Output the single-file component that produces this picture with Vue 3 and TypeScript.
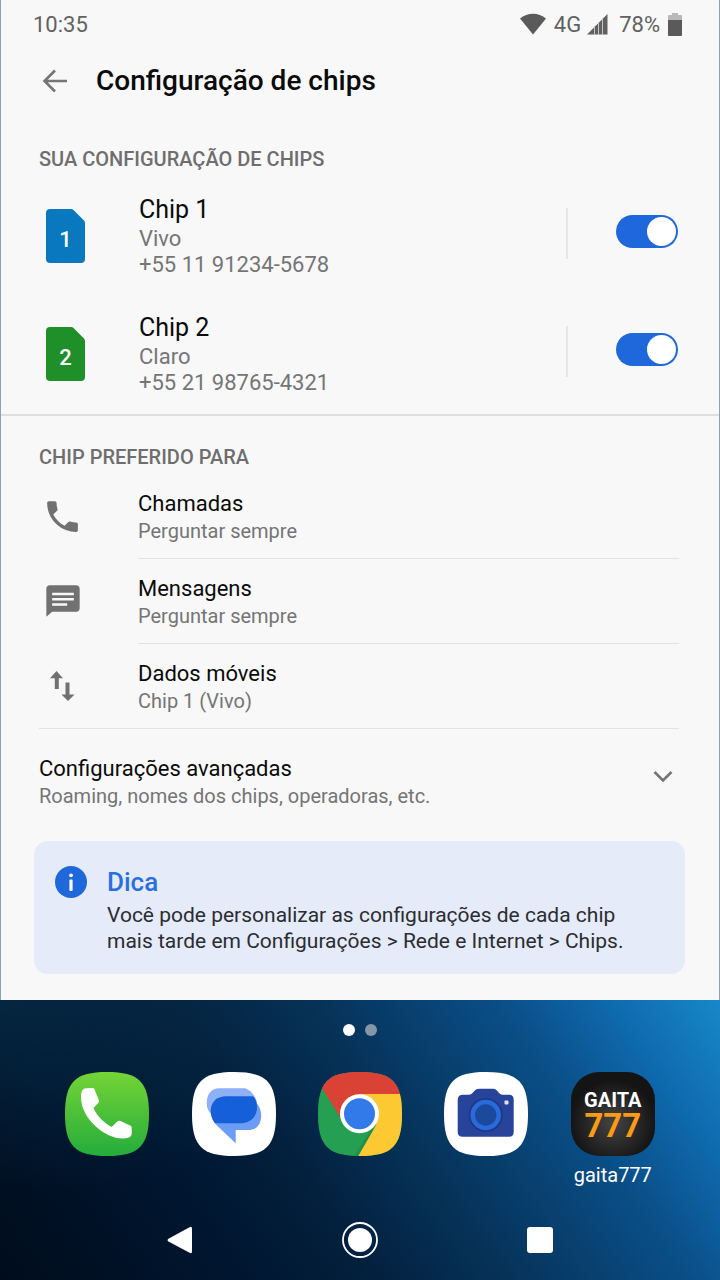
<script setup lang="ts">
import { ref } from 'vue'

interface Sim {
  slot: number
  name: string
  carrier: string
  phone: string
  color: string
  enabled: boolean
}

interface Preference {
  id: 'calls' | 'messages' | 'data'
  title: string
  value: string
}

const sims = ref<Sim[]>([
  { slot: 1, name: 'Chip 1', carrier: 'Vivo', phone: '+55 11 91234-5678', color: '#0a78be', enabled: true },
  { slot: 2, name: 'Chip 2', carrier: 'Claro', phone: '+55 21 98765-4321', color: '#1f9029', enabled: true },
])

const preferences: Preference[] = [
  { id: 'calls', title: 'Chamadas', value: 'Perguntar sempre' },
  { id: 'messages', title: 'Mensagens', value: 'Perguntar sempre' },
  { id: 'data', title: 'Dados móveis', value: 'Chip 1 (Vivo)' },
]

const squircle = 'M42 0C74 0 84 10 84 42S74 84 42 84 0 74 0 42 10 0 42 0Z'
</script>

<template>
  <div class="device">
    <main class="settings">
      <div class="status">
        <span>10:35</span>
        <div class="status-icons">
          <svg class="wifi" width="26" height="22" viewBox="0 0 26 22" aria-hidden="true">
            <path d="M0 5.500C7.500-.8 18.500-.8 26 5.500L13 21.500Z" fill="#5a5a5a" />
          </svg>
          <span class="network">4G</span>
          <svg class="signal" width="21" height="21" viewBox="0 0 21 21" aria-hidden="true">
            <path d="M0 20.500L20.500 0V20.500Z" fill="#606060" />
            <path d="M7.500 12V21M11.500 8.500V21M15.500 4.500V21" stroke="#c4c4c4" stroke-width="1" />
          </svg>
          <span class="percent">78%</span>
          <svg width="14" height="23" viewBox="0 0 14 23" aria-hidden="true">
            <path d="M4 0h6v2h3q1 0 1 1v5H0V3q0-1 1-1h3Z" fill="#b9b9b9" />
            <path d="M0 7h14v15q0 1-1 1H1q-1 0-1-1Z" fill="#5a5a5a" />
          </svg>
        </div>
      </div>

      <header class="app-bar">
        <button class="back" type="button" aria-label="Voltar">
          <svg width="26" height="24" viewBox="0 0 26 24" aria-hidden="true">
            <path d="M25 12H2.500M13 1.500L2.500 12L13 22.500" fill="none" stroke="#757575" stroke-width="2.600" />
          </svg>
        </button>
        <h1>Configuração de chips</h1>
      </header>

      <section class="sims">
        <h2>SUA CONFIGURAÇÃO DE CHIPS</h2>
        <div v-for="sim in sims" :key="sim.slot" class="sim">
          <div class="sim-icon">
            <svg width="39" height="54" viewBox="0 0 39 54" aria-hidden="true">
              <path d="M4 0H25Q26.500 0 27.500 1L38 11.500Q39 12.500 39 14V50Q39 54 35 54H4Q0 54 0 50V4Q0 0 4 0Z" :fill="sim.color" />
              <text x="19.500" y="38" text-anchor="middle">{{ sim.slot }}</text>
            </svg>
          </div>
          <label class="sim-text" :for="`sim-${sim.slot}`">
            <span class="sim-name">{{ sim.name }}</span>
            <span class="sim-detail">{{ sim.carrier }}</span>
            <span class="sim-detail">{{ sim.phone }}</span>
          </label>
          <div class="sim-action">
            <input :id="`sim-${sim.slot}`" v-model="sim.enabled" class="switch" type="checkbox" role="switch" />
          </div>
        </div>
      </section>

      <section class="preferred">
        <h2>CHIP PREFERIDO PARA</h2>
        <button v-for="item in preferences" :key="item.id" class="preference" type="button">
          <span class="preference-icon">
            <svg v-if="item.id === 'calls'" width="41" height="41" viewBox="0 0 24 24" aria-hidden="true">
              <path d="M6.620 10.790c1.440 2.830 3.760 5.140 6.590 6.590l2.200-2.200c.27-.27.67-.36 1.020-.24 1.120.37 2.330.57 3.570.57.55 0 1 .45 1 1V20c0 .55-.45 1-1 1-9.390 0-17-7.610-17-17 0-.55.45-1 1-1h3.500c.55 0 1 .45 1 1 0 1.250.2 2.450.57 3.570.11.35.03.74-.25 1.020l-2.200 2.200z" />
            </svg>
            <svg v-else-if="item.id === 'messages'" width="40" height="40" viewBox="0 0 24 24" aria-hidden="true">
              <path fill-rule="evenodd" d="M20 2.500H4c-1.100 0-2 .9-2 2V21.500l3.500-3H20c1.100 0 2-.9 2-2v-12c0-1.100-.9-2-2-2zM5.500 7h13v1.500h-13zM5.500 10.200h13v1.500h-13zM5.500 13.400h9v1.500h-9z" />
            </svg>
            <svg v-else width="25" height="30" viewBox="0 0 25 30" aria-hidden="true">
              <path d="M6.500 0L13 7.200H8.800V18H4.800V7.200H0ZM15.500 11.500H19.500V23.500H24.500L18 30L11.500 23.500H15.500Z" />
            </svg>
          </span>
          <span class="preference-text">
            <span class="title">{{ item.title }}</span>
            <span class="sub">{{ item.value }}</span>
          </span>
        </button>
      </section>

      <button class="advanced" type="button">
        <span class="advanced-text">
          <span class="title">Configurações avançadas</span>
          <span class="sub">Roaming, nomes dos chips, operadoras, etc.</span>
        </span>
        <svg width="20" height="44" viewBox="0 0 20 44" aria-hidden="true">
          <path d="M1.500 17L10 25.500L18.500 17" fill="none" stroke="#757575" stroke-width="2.600" />
        </svg>
      </button>

      <aside class="tip">
        <svg width="32" height="32" viewBox="0 0 32 32" aria-hidden="true">
          <circle cx="16" cy="16" r="16" fill="#1f68dc" />
          <circle cx="16" cy="9.300" r="1.900" fill="#fff" />
          <rect x="14.400" y="13.500" width="3.200" height="11.500" rx="1" fill="#fff" />
        </svg>
        <div class="tip-text">
          <h3>Dica</h3>
          <p>Você pode personalizar as configurações de cada chip mais tarde em Configurações &gt; Rede e Internet &gt; Chips.</p>
        </div>
      </aside>
    </main>

    <div class="home">
      <div class="pages">
        <span class="page current"></span>
        <span class="page"></span>
      </div>

      <div class="dock">
        <button class="app" type="button" aria-label="Telefone">
          <svg width="84" height="84" viewBox="0 0 84 84" aria-hidden="true">
            <defs>
              <linearGradient id="phone-green" x1="0" y1="0" x2="0" y2="1">
                <stop offset="0" stop-color="#74d436" />
                <stop offset="1" stop-color="#24ac3c" />
              </linearGradient>
            </defs>
            <path :d="squircle" fill="url(#phone-green)" />
            <path d="M16 25C16 19 18 16.300 21 16.300L27.500 16Q29 16 29.500 17.200L34 28.500Q34.300 29.700 33.500 30.500L28.500 36C32 44 39 51 46.700 55L52.500 49.300Q54 48.300 55.500 49L65.500 53.700Q66.700 54.300 66.700 55.500V62Q66.700 64.500 64 65.500C47 71.500 16 50 16 25Z" fill="#fff" />
          </svg>
        </button>
        <button class="app" type="button" aria-label="Mensagens">
          <svg width="84" height="84" viewBox="0 0 84 84" aria-hidden="true">
            <path :d="squircle" fill="#fff" />
            <path d="M27 16.300H53C59 18 64 25 65 31L27 50L19 42C16 39 14.700 35 14.700 31C14.700 22 20 16.300 27 16.300Z" fill="#8db0f6" />
            <path d="M64 31C72 37 71.500 58 57 58H43.700V71.300L26 54.500C22 51 19 46 19 40Z" fill="#6b9cf6" />
            <path d="M34 24.300H61C64 27 65 31 65 35C65 46 57 51.300 48 51.300H23C20 47 18.700 43 18.700 39C18.700 29 26 24.300 34 24.300Z" fill="#1560d8" />
          </svg>
        </button>
        <button class="app" type="button" aria-label="Chrome">
          <svg width="84" height="84" viewBox="0 0 84 84" aria-hidden="true">
            <defs>
              <clipPath id="chrome-tile"><path :d="squircle" /></clipPath>
            </defs>
            <g clip-path="url(#chrome-tile)">
              <path d="M0 0H84V84H0Z" fill="#25a052" />
              <path d="M53 57L58 60L44 84H36Z" fill="#1f9249" />
              <path d="M84 22H41V42L58.500 52.500L40.300 84H84Z" fill="#fdc932" />
              <path d="M0 0H84V22H41V42L23 46.500L4.700 17.300L0 9.500Z" fill="#d94235" />
            </g>
            <circle cx="41.500" cy="41.800" r="19.500" fill="#fff" />
            <circle cx="41.500" cy="41.800" r="15.500" fill="#3279ea" />
          </svg>
        </button>
        <button class="app" type="button" aria-label="Câmera">
          <svg width="84" height="84" viewBox="0 0 84 84" aria-hidden="true">
            <path :d="squircle" fill="#fff" />
            <path d="M19 22.700H25Q27 22.700 28.500 21L31 18.200Q32.300 16.700 35 16.700H49Q51.500 16.700 53 18.500L55 21Q56.500 22.700 58.500 22.700H65Q69.700 22.700 69.700 27.500V60Q69.700 64.700 65 64.700H18.500Q13.700 64.700 13.700 60V28Q13.700 22.700 19 22.700Z" fill="#28439a" />
            <circle cx="41.700" cy="43" r="17" fill="#1f3784" />
            <circle cx="41.700" cy="43" r="13" fill="#1b4a9c" stroke="#286bdc" stroke-width="4.500" />
            <rect x="60.500" y="28.500" width="4" height="4" rx="1" fill="#dfe6f6" />
          </svg>
        </button>
        <button class="app" type="button">
          <span class="gaita-tile">
            <span class="gaita-word">GAITA</span>
            <span class="gaita-number">777</span>
          </span>
          <span class="app-label">gaita777</span>
        </button>
      </div>

      <nav class="system-nav">
        <button type="button" aria-label="Voltar">
          <svg width="26" height="28" viewBox="0 0 26 28" aria-hidden="true">
            <path d="M1 13L22.500 1.200Q25 0 25 2.500V25.500Q25 28 22.500 26.700L1 15.300Q0 14.200 1 13Z" fill="#fff" />
          </svg>
        </button>
        <button type="button" aria-label="Início">
          <svg width="36" height="36" viewBox="0 0 36 36" aria-hidden="true">
            <circle cx="18" cy="18" r="17" fill="none" stroke="#fff" stroke-width="1.800" />
            <circle cx="18" cy="18" r="12" fill="#fff" />
          </svg>
        </button>
        <button type="button" aria-label="Recentes">
          <svg width="26" height="26" viewBox="0 0 26 26" aria-hidden="true">
            <rect width="26" height="26" rx="3" fill="#fff" />
          </svg>
        </button>
      </nav>
    </div>
  </div>
</template>

<style>
body {
  margin: 0;
  background: #021a35;
}
</style>

<style scoped>
.device {
  display: flex;
  flex-direction: column;
  min-height: 100vh;
  font-family: Roboto, "Liberation Sans", sans-serif;
  color: #0b0b0b;
}

h1,
h2,
h3,
p {
  margin: 0;
}

button {
  margin: 0;
  padding: 0;
  border: 0;
  background: none;
  font: inherit;
  color: inherit;
  text-align: left;
  cursor: pointer;
}

svg {
  display: block;
  flex: none;
}

.settings {
  padding-bottom: 26px;
  border: solid #8fa2b0;
  border-width: 0 1px;
  background: #f8f8f8;
}

.status {
  display: flex;
  align-items: center;
  justify-content: space-between;
  height: 48px;
  padding: 0 37px 0 32px;
  font-size: 22px;
  color: #616161;
}

.status-icons {
  display: flex;
  align-items: center;
}

.network {
  margin: 0 6px 0 8px;
}

.percent {
  margin: 0 8px 0 11px;
}

.app-bar {
  display: flex;
  align-items: center;
  gap: 28px;
  height: 66px;
  padding: 0 41px;
}

h1 {
  font-size: 28px;
  font-weight: 500;
  line-height: 36px;
}

h2 {
  padding: 0 38px;
  font-size: 20px;
  font-weight: 500;
  line-height: 24px;
  color: #6e6e6e;
}

.sims {
  padding: 33px 0 1px;
  border-bottom: 2px solid #dedede;
}

.sims h2 {
  padding-bottom: 6px;
}

.sim {
  display: flex;
  align-items: center;
  padding: 16px 41px 17px 45px;
}

.sim-icon {
  width: 93px;
}

.sim-icon text {
  font-size: 22px;
  font-weight: 500;
  fill: #fff;
}

.sim-text {
  display: flex;
  flex: 1;
  flex-direction: column;
}

.sim-name {
  font-size: 25px;
  line-height: 33px;
}

.sim-detail {
  font-size: 22px;
  line-height: 26px;
  color: #757575;
}

.sim-action {
  align-self: flex-start;
  box-sizing: border-box;
  height: 51px;
  margin-top: 15px;
  padding: 7px 0 0 48px;
  border-left: 2px solid #e6e6e6;
}

.switch {
  appearance: none;
  display: flex;
  align-items: center;
  width: 62px;
  height: 33px;
  margin: 0;
  padding: 0 2px;
  border-radius: 17px;
  background: #b0b0b0;
  box-sizing: border-box;
  cursor: pointer;
}

.switch::before {
  content: "";
  width: 29px;
  height: 29px;
  border-radius: 50%;
  background: #fff;
}

.switch:checked {
  justify-content: flex-end;
  background: #1f68dc;
}

.preferred {
  padding-top: 29px;
}

.preferred h2 {
  padding-bottom: 5px;
}

.preference {
  display: flex;
  width: 100%;
  padding: 0 40px 0 38px;
}

.preference-icon {
  display: flex;
  align-items: center;
  justify-content: center;
  width: 47px;
  padding-right: 52px;
  border-bottom: 1px solid transparent;
}

.preference-icon svg {
  fill: #717171;
}

.preference-text {
  display: flex;
  flex: 1;
  flex-direction: column;
  padding: 16px 0 13px;
  border-bottom: 1px solid #e2e2e2;
}

.preference:last-child .preference-icon {
  border-bottom-color: #e2e2e2;
}

.title {
  font-size: 22px;
  line-height: 28px;
}

.sub {
  font-size: 20px;
  line-height: 27px;
  color: #757575;
}

.advanced {
  display: flex;
  align-items: flex-start;
  justify-content: space-between;
  width: 100%;
  padding: 26px 46px 31px 38px;
}

.advanced-text {
  display: flex;
  flex-direction: column;
}

.tip {
  display: flex;
  gap: 20px;
  margin: 0 34px 0 33px;
  padding: 25px 52px 20px 21px;
  border-radius: 14px;
  background: #e5ebf8;
}

.tip h3 {
  font-size: 26px;
  font-weight: 500;
  line-height: 32px;
  color: #2a6fe0;
}

.tip p {
  margin-top: 4px;
  font-size: 21px;
  line-height: 26px;
  color: #2b2d31;
}

.home {
  display: flex;
  flex: 1;
  flex-direction: column;
  background:
    radial-gradient(ellipse 50% 70% at 0 0, rgba(8, 50, 78, 0.6), rgba(8, 50, 78, 0)),
    linear-gradient(55deg, #000c1c 0%, #001630 27%, #031f3c 40%, #06335a 56%, #0a4f88 76%, #0e68ac 87%, #1788c8 100%);
  color: #fff;
}

.pages {
  display: flex;
  justify-content: center;
  gap: 10px;
  padding-top: 24px;
}

.page {
  width: 12px;
  height: 12px;
  border-radius: 50%;
  background: #8496a8;
}

.page.current {
  background: #fff;
}

.dock {
  display: grid;
  grid-template-columns: repeat(5, 1fr);
  align-items: start;
  padding: 36px 44px 0;
}

.app {
  display: flex;
  flex-direction: column;
  align-items: center;
}

.gaita-tile {
  display: flex;
  flex-direction: column;
  align-items: center;
  justify-content: center;
  width: 84px;
  height: 84px;
  border-radius: 28px;
  background: radial-gradient(circle at 50% 60%, #444, #141414 65%);
  font-weight: 700;
}

.gaita-word {
  font-size: 20px;
  line-height: 24px;
}

.gaita-number {
  font-size: 33px;
  line-height: 28px;
  color: #fb9a14;
}

.app-label {
  margin-top: 7px;
  font-size: 20px;
  line-height: 24px;
}

.system-nav {
  display: grid;
  grid-template-columns: repeat(3, 1fr);
  margin-top: auto;
  padding: 0 90px 22px;
}

.system-nav button {
  display: flex;
  align-items: center;
  justify-content: center;
  height: 36px;
}
</style>
